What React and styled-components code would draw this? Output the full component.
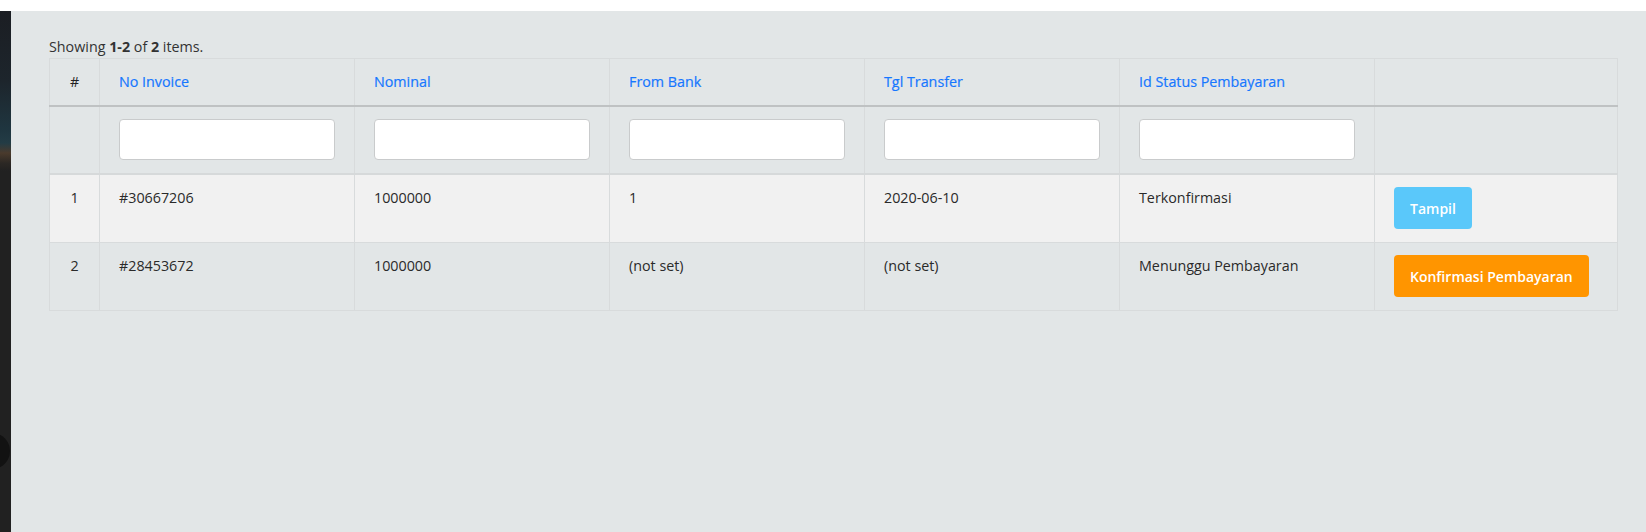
import React from 'react';
import styled, { createGlobalStyle } from 'styled-components';

const GlobalStyle = createGlobalStyle`
  html, body {
    margin: 0;
    padding: 0;
    background: #fff;
  }
  body {
    font-family: "Open Sans", "Liberation Sans", sans-serif;
    font-size: 14.3px;
    color: #222;
  }
`;

const Page = styled.div`
  padding-top: 11px;
  height: 532px;
  box-sizing: border-box;
  display: flex;
  background: #fff;
`;

const SideStrip = styled.div`
  width: 11px;
  flex-shrink: 0;
  position: relative;
  overflow: hidden;
  background: linear-gradient(
    180deg,
    #1b1e23 0px,
    #1d252c 70px,
    #1f3640 120px,
    #233c45 132px,
    #4a3a2c 142px,
    #2c2824 152px,
    #212121 160px,
    #212121 100%
  );
  &::after {
    content: '';
    position: absolute;
    left: -26px;
    top: 422px;
    width: 36px;
    height: 36px;
    border-radius: 50%;
    background: #121212;
  }
`;

const Main = styled.div`
  flex: 1;
  background: #e2e6e7;
  padding: 25px 28px 0 38px;
`;

const Summary = styled.div`
  line-height: 22px;
  color: #333;
  b {
    font-weight: 700;
  }
`;

const Table = styled.table`
  width: 1569px;
  border-collapse: collapse;
  table-layout: fixed;
  border: 1px solid #d8dbdc;
`;

const HeadCell = styled.th`
  padding: 12px 19px;
  line-height: 22px;
  font-weight: 400;
  text-align: ${(p) => (p.$center ? 'center' : 'left')};
  border-left: 1px solid #d8dbdc;
  border-bottom: 2px solid #bfc2c3;
  color: #222;
  a {
    color: #1677ff;
    text-decoration: none;
    -webkit-text-stroke: 0.2px #1677ff;
  }
`;

const FilterCell = styled.td`
  padding: 12px 19px 13px;
  border-left: 1px solid #d8dbdc;
  border-bottom: 2px solid #d6d9da;
`;

const FilterInput = styled.input`
  display: block;
  width: 100%;
  height: 41px;
  box-sizing: border-box;
  border: 1px solid #c9cbcc;
  border-radius: 4px;
  background: #fff;
  outline: none;
`;

const Row = styled.tr`
  background: ${(p) => (p.$odd ? '#f1f1f1' : 'transparent')};
`;

const Cell = styled.td`
  padding: 12px 19px 13px;
  line-height: 22px;
  vertical-align: top;
  text-align: ${(p) => (p.$center ? 'center' : 'left')};
  border-left: 1px solid #d8dbdc;
  border-bottom: 1px solid #d8dbdc;
  color: #2a2a2a;
`;

const ActionButton = styled.button`
  display: block;
  height: 42px;
  padding: 0 16px;
  border: none;
  border-radius: 4px;
  background: ${(p) => p.$bg};
  color: #fff;
  font-family: inherit;
  font-size: 14px;
  font-weight: 600;
  cursor: pointer;
`;

const columns = ['No Invoice', 'Nominal', 'From Bank', 'Tgl Transfer', 'Id Status Pembayaran'];

const rows = [
  {
    no: 1,
    invoice: '#30667206',
    nominal: '1000000',
    bank: '1',
    tgl: '2020-06-10',
    status: 'Terkonfirmasi',
    action: { label: 'Tampil', bg: '#5ac8fa' },
  },
  {
    no: 2,
    invoice: '#28453672',
    nominal: '1000000',
    bank: '(not set)',
    tgl: '(not set)',
    status: 'Menunggu Pembayaran',
    action: { label: 'Konfirmasi Pembayaran', bg: '#ff9500' },
  },
];

export default function App() {
  return (
    <>
      <GlobalStyle />
      <Page>
        <SideStrip />
        <Main>
          <Summary>
            Showing <b>1-2</b> of <b>2</b> items.
          </Summary>
          <Table>
            <colgroup>
              <col style={{ width: 50 }} />
              {columns.map((c) => (
                <col key={c} style={{ width: 255 }} />
              ))}
              <col />
            </colgroup>
            <thead>
              <tr>
                <HeadCell $center>#</HeadCell>
                {columns.map((c) => (
                  <HeadCell key={c}>
                    <a href="#">{c}</a>
                  </HeadCell>
                ))}
                <HeadCell />
              </tr>
              <tr>
                <FilterCell />
                {columns.map((c) => (
                  <FilterCell key={c}>
                    <FilterInput type="text" />
                  </FilterCell>
                ))}
                <FilterCell />
              </tr>
            </thead>
            <tbody>
              {rows.map((r, i) => (
                <Row key={r.no} $odd={i % 2 === 0}>
                  <Cell $center>{r.no}</Cell>
                  <Cell>{r.invoice}</Cell>
                  <Cell>{r.nominal}</Cell>
                  <Cell>{r.bank}</Cell>
                  <Cell>{r.tgl}</Cell>
                  <Cell>{r.status}</Cell>
                  <Cell>
                    <ActionButton $bg={r.action.bg}>{r.action.label}</ActionButton>
                  </Cell>
                </Row>
              ))}
            </tbody>
          </Table>
        </Main>
      </Page>
    </>
  );
}
